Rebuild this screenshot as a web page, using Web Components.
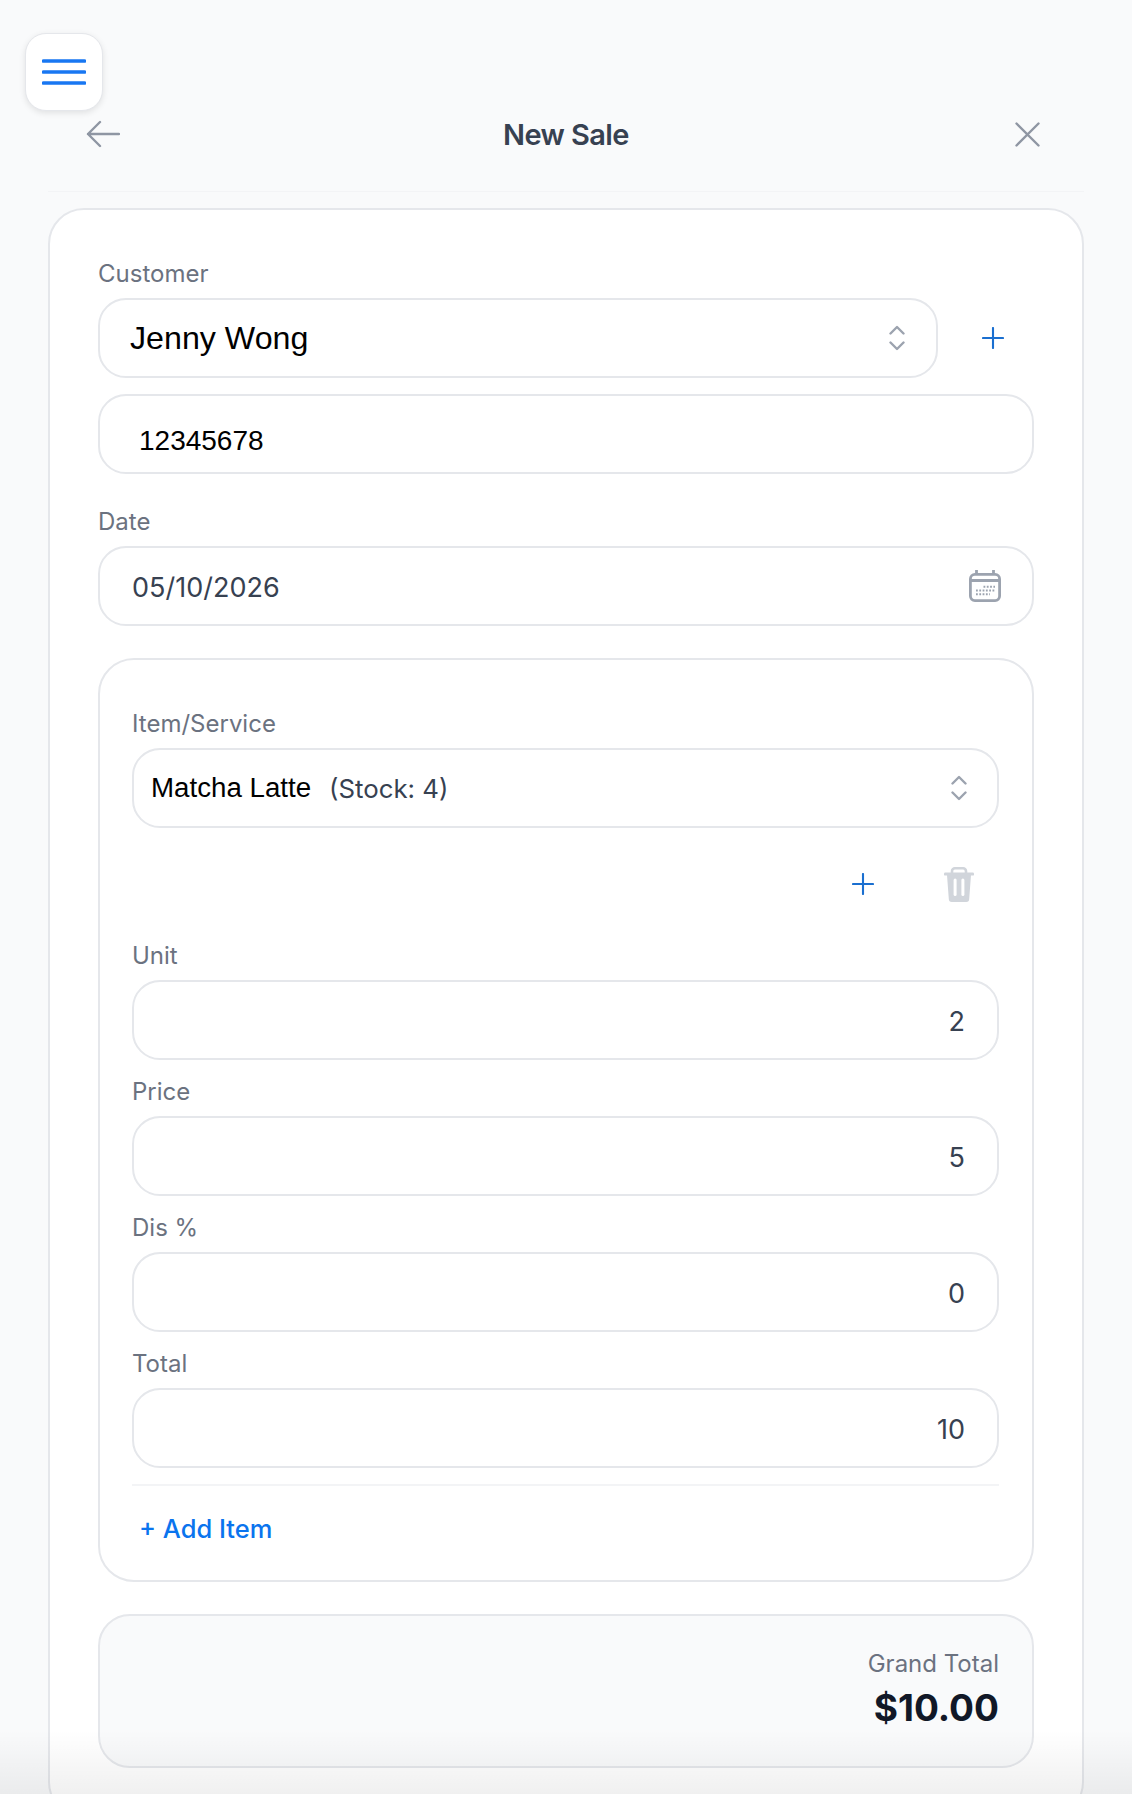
<!doctype html>
<html lang="en"><head><meta charset="utf-8"><title>New Sale</title>
<style>
html,body{margin:0;padding:0;background:#f9fafb;}
body{height:1794px;overflow:hidden;position:relative;font-family:Inter,"Liberation Sans",sans-serif;color:#374151;}
</style></head><body>
<sale-menu-button></sale-menu-button>
<sale-page>
  <sale-header slot="header" title="New Sale"></sale-header>
  <sale-card>
    <sale-field label="Customer" gap="8">
      <sale-row>
        <sale-box pad="30" style="flex:1"><sale-text kind="big">Jenny Wong</sale-text><sale-icon slot="end" name="updown" style="margin-right:31px"></sale-icon></sale-box>
        <sale-icon name="plus" style="margin:0 30px 0 44px"></sale-icon>
      </sale-row>
      <sale-box pad="39" style="margin-top:16px"><sale-text kind="sys" style="padding-top:13px;font-size:28px">12345678</sale-text></sale-box>
    </sale-field>
    <sale-field label="Date" style="margin-top:32px">
      <sale-box pad="32"><sale-text kind="value" style="padding-top:3px">05/10/2026</sale-text><sale-icon slot="end" name="calendar" style="margin-right:31px"></sale-icon></sale-box>
    </sale-field>
    <sale-item-card>
      <sale-field label="Item/Service" gap="8">
        <sale-box pad="17"><sale-text kind="sys">Matcha Latte</sale-text><sale-text kind="value" style="margin-left:18px;padding-top:1px;font-size:25.8px">(Stock: 4)</sale-text><sale-icon slot="end" name="updown" style="margin-right:30px"></sale-icon></sale-box>
      </sale-field>
      <sale-actions><sale-icon name="plus"></sale-icon><sale-icon name="trash"></sale-icon></sale-actions>
      <sale-field label="Unit" gap="8"><sale-box align="end">2</sale-box></sale-field>
      <sale-field label="Price" gap="8" style="margin-top:16px"><sale-box align="end">5</sale-box></sale-field>
      <sale-field label="Dis %" gap="8" style="margin-top:16px"><sale-box align="end">0</sale-box></sale-field>
      <sale-field label="Total" gap="8" style="margin-top:16px"><sale-box align="end">10</sale-box></sale-field>
      <sale-add-item>+ Add Item</sale-add-item>
    </sale-item-card>
    <sale-grand-total label="Grand Total" amount="$10.00"></sale-grand-total>
  </sale-card>
</sale-page>
<sale-fade></sale-fade>
<script>
const ICONS={
 menu:'<svg width="44" height="26" viewBox="0 0 44 26" fill="none" stroke="#1877f2" stroke-width="3.6" stroke-linecap="round"><path d="M1.5 2H42.5M1.5 13H42.5M1.5 24H42.5"/></svg>',
 back:'<svg width="34" height="28" viewBox="0 0 34 28" fill="none" stroke="#8f96a3" stroke-width="2.4" stroke-linecap="round" stroke-linejoin="round"><path d="M33 14H2M14 2L2 14L14 26"/></svg>',
 close:'<svg width="25" height="25" viewBox="0 0 25 25" fill="none" stroke="#8f96a3" stroke-width="2.4" stroke-linecap="round"><path d="M1.5 1.5L23.5 23.5M23.5 1.5L1.5 23.5"/></svg>',
 updown:'<svg width="16" height="26" viewBox="0 0 16 26" fill="none" stroke="#9ca3af" stroke-width="2.4" stroke-linecap="round" stroke-linejoin="round"><path d="M1.5 8.5L8 2L14.5 8.5M1.5 17.5L8 24L14.5 17.5"/></svg>',
 plus:'<svg width="22" height="22" viewBox="0 0 22 22" fill="none" stroke="#1a6fd0" stroke-width="2.1" stroke-linecap="round"><path d="M11 1V21M1 11H21"/></svg>',
 calendar:'<svg width="32" height="32" viewBox="0 0 32 32" fill="none" stroke="#9ca3af" stroke-width="2.8"><rect x="1.4" y="4.4" width="29.2" height="26.2" rx="4.5"/><path d="M1.5 10.5H30.5M7.5 0V5M24.5 0V5"/><g stroke-width="1.9" stroke-dasharray="1.8 1.5"><path d="M14.5 16.8H26"/><path d="M7 20.5H26"/><path d="M7 24.2H21"/></g></svg>',
 trash:'<svg width="30" height="35" viewBox="0 0 30 35"><path fill="none" stroke="#d1d5db" stroke-width="2.6" d="M8 6.5V4.2A2.9 2.9 0 0 1 10.9 1.3H19.1A2.9 2.9 0 0 1 22 4.2V6.5"/><rect fill="#d1d5db" x="0" y="5.6" width="30" height="3" rx="1.2"/><path fill="#d1d5db" d="M3 8H27L25.2 32A3 3 0 0 1 22.2 35H7.8A3 3 0 0 1 4.8 32Z"/><rect fill="#fff" x="9.6" y="11.5" width="3" height="17.5" rx="1.5"/><rect fill="#fff" x="17.4" y="11.5" width="3" height="17.5" rx="1.5"/></svg>'
};
function def(name,css,html){
  customElements.define(name,class extends HTMLElement{
    constructor(){super();this.attachShadow({mode:'open'});}
    connectedCallback(){
      const h=typeof html==='function'?html(this):html;
      this.shadowRoot.innerHTML='<style>'+css+'</style>'+h;
    }
  });
}
def('sale-page',':host{display:block;padding:0 48px}','<slot name="header"></slot><slot></slot>');
def('sale-menu-button',`:host{display:flex;align-items:center;justify-content:center;position:absolute;left:25px;top:33px;width:78px;height:78px;box-sizing:border-box;background:#fff;border:1px solid #e5e7eb;border-radius:21px;box-shadow:0 2px 6px rgba(0,0,0,.10);z-index:2}`,ICONS.menu);
def('sale-header',`:host{display:grid;grid-template-columns:1fr auto 1fr;align-items:center;height:52px;padding:107px 44px 32px 44px;border-bottom:1px solid #f3f4f6;margin-bottom:16px}
  h1{margin:0;font:600 29px/52px Inter,sans-serif;color:#374151;letter-spacing:-.6px;padding-top:2px}
  .b{display:flex;margin-left:-6px}.c{display:flex;justify-content:flex-end}`,
  el=>`<div class="b">${ICONS.back}</div><h1>${el.getAttribute('title')}</h1><div class="c">${ICONS.close}</div>`);
def('sale-card',`:host{display:block;background:#fff;border:2px solid #e5e7eb;border-radius:36px;padding:48px}`,'<slot></slot>');
def('sale-row',`:host{display:flex;align-items:center}`,'<slot></slot>');
def('sale-field',`:host{display:block}
  label{display:block;font:400 24px/32px Inter,sans-serif;color:#6b7280}`,
  el=>`<label>${el.getAttribute('label')}</label><div style="height:${el.getAttribute('gap')||8}px"></div><slot></slot>`);
def('sale-box',`:host{display:flex;align-items:center;box-sizing:border-box;height:80px;background:#fff;border:2px solid #e5e7eb;border-radius:28px;font:400 27px/1 Inter,sans-serif;color:#374151}
  .m{flex:1;display:flex;align-items:center;min-width:0}`,
  el=>{const end=el.getAttribute('align')==='end';
    return `<div class="m" style="padding-left:${el.getAttribute('pad')||0}px;${end?'justify-content:flex-end;padding-right:32px;padding-top:2px':''}"><slot></slot></div><slot name="end"></slot>`;});
def('sale-text',`:host{display:inline-block;white-space:pre}
  :host([kind=big]){font:400 32.2px/1 "Liberation Sans",sans-serif;color:#000}
  :host([kind=sys]){font:400 27.7px/1 "Liberation Sans",sans-serif;color:#000}
  :host([kind=value]){font:400 27px/1 Inter,sans-serif;color:#374151}`,'<slot></slot>');
def('sale-icon',`:host{display:inline-flex;line-height:0;flex:none}`,el=>ICONS[el.getAttribute('name')]);
def('sale-item-card',`:host{display:block;margin-top:32px;border:2px solid #e5e7eb;border-radius:36px;padding:48px 33px 0 32px;background:#fff;box-sizing:border-box;height:924px}`,'<slot></slot>');
def('sale-actions',`:host{display:flex;align-items:center;justify-content:flex-end;height:112px;gap:70px;padding-right:25px}`,'<slot></slot>');
def('sale-add-item',`:host{display:block;margin-top:16px;border-top:2px solid #f3f4f6;padding:27px 7px 0;font:500 25.5px/32px Inter,sans-serif;color:#0a74ee}`,'<slot></slot>');
def('sale-grand-total',`:host{display:flex;flex-direction:column;align-items:flex-end;box-sizing:border-box;height:154px;margin-top:32px;padding:32px 33px 0;background:#f9fafb;border:2px solid #e5e7eb;border-radius:32px}
  .l{font:400 24px/32px Inter,sans-serif;color:#6b7280}
  .a{font:700 37px/44px Inter,sans-serif;color:#111827;margin-top:6px}`,
  el=>`<div class="l">${el.getAttribute('label')}</div><div class="a">${el.getAttribute('amount')}</div>`);
def('sale-fade',`:host{display:block;position:absolute;left:0;right:0;bottom:0;height:64px;pointer-events:none;background:linear-gradient(to bottom,rgba(0,0,0,0),rgba(0,0,0,.06));z-index:3}`,'');
</script>
</body></html>
